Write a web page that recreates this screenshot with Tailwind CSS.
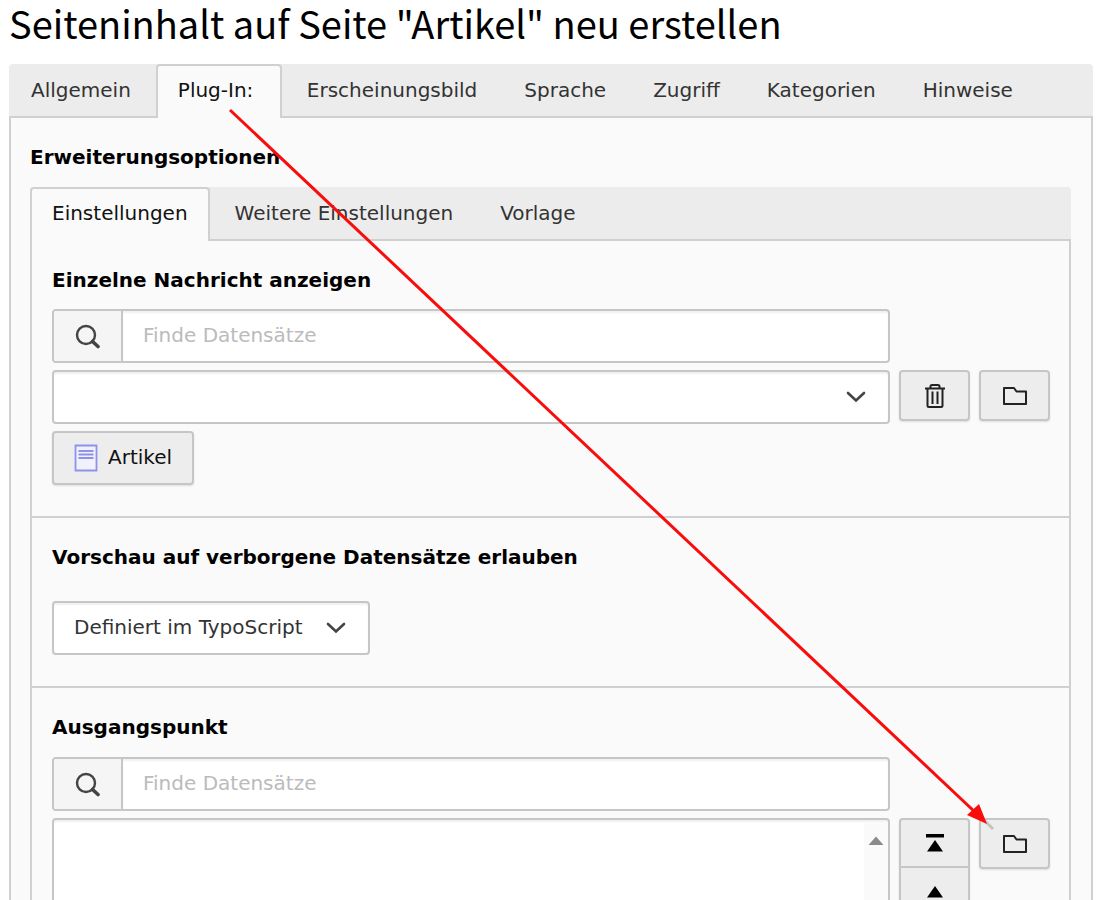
<!DOCTYPE html>
<html lang="de">
<head>
  <meta charset="UTF-8" />
  <meta name="viewport" content="width=device-width, initial-scale=1.0" />
  <title>Seiteninhalt auf Seite "Artikel" neu erstellen</title>
  <script src="https://cdn.jsdelivr.net/npm/@tailwindcss/browser@4"></script>
</head>
<body class="bg-white">

  <!-- Icons -->
  <svg class="hidden">
    <symbol id="icon-search" viewBox="0 0 26 26">
      <circle cx="11" cy="12" r="9" fill="none" stroke="#444" stroke-width="2.4" />
      <path d="M17.500 18.500L23 23.500" fill="none" stroke="#444" stroke-width="3.600" stroke-linecap="round" />
    </symbol>
    <symbol id="icon-chevron" viewBox="0 0 20 12">
      <path d="M2 2L10 9.500L18 2" fill="none" stroke="#444" stroke-width="2.600" stroke-linecap="round" />
    </symbol>
    <symbol id="icon-trash" viewBox="0 0 22 26">
      <path d="M1 5.500H21M6.500 5V3.500Q6.500 2 8 2H14Q15.500 2 15.500 3.500V5M3.500 6V22.500Q3.500 24 5 24H17Q18.500 24 18.500 22.500V6M8.500 8.500V21M13.500 8.500V21" fill="none" stroke="#222" stroke-width="2" />
    </symbol>
    <symbol id="icon-folder" viewBox="0 0 26 20">
      <path d="M2 2H12L14.500 5.500H24V18H2Z" fill="none" stroke="#222" stroke-width="2" stroke-linejoin="round" />
    </symbol>
    <symbol id="icon-page" viewBox="0 0 24 28">
      <path d="M1.500 1.500H22.500V26.500H1.500Z" fill="#f1f1fb" stroke="#8f92ea" stroke-width="1.800" />
      <path d="M4.500 7H19.500M4.500 10.500H19.500M4.500 14H19.500" fill="none" stroke="#8f92ea" stroke-width="1.800" />
    </symbol>
    <symbol id="icon-up" viewBox="0 0 18 18">
      <path d="M9 4L17 15.500H1Z" fill="#000" />
    </symbol>
    <symbol id="icon-top" viewBox="0 0 18 18">
      <path d="M0 0H18V3.500H0ZM9 6L17 17.500H1Z" fill="#000" />
    </symbol>
  </svg>

  <div class="relative h-screen overflow-hidden pr-[7px] pl-[9px] font-['DejaVu_Sans',sans-serif] text-[20px] leading-6 text-[#333]">

    <h1 class="h-16 font-['Noto_Sans_CJK_SC',sans-serif] text-[38px] leading-[46px] text-black">Seiteninhalt auf Seite "Artikel" neu erstellen</h1>

    <!-- Hauptreiter -->
    <nav class="flex gap-[3px] rounded-t border-b-2 border-[#d0d0d0] bg-[#ececec]">
      <a href="#" class="border-2 border-b-0 border-transparent px-5 pt-3 pb-3.5">Allgemein</a>
      <a href="#" class="-mb-0.5 min-w-[126px] rounded-t border-2 border-b-0 border-[#d0d0d0] bg-[#fafafa] px-5 pt-3 pb-4 text-[#111]">Plug-In:</a>
      <a href="#" class="border-2 border-b-0 border-transparent px-5 pt-3 pb-3.5">Erscheinungsbild</a>
      <a href="#" class="border-2 border-b-0 border-transparent px-5 pt-3 pb-3.5">Sprache</a>
      <a href="#" class="border-2 border-b-0 border-transparent px-5 pt-3 pb-3.5">Zugriff</a>
      <a href="#" class="border-2 border-b-0 border-transparent px-5 pt-3 pb-3.5">Kategorien</a>
      <a href="#" class="border-2 border-b-0 border-transparent px-5 pt-3 pb-3.5">Hinweise</a>
    </nav>

    <main class="border-x-2 border-[#d0d0d0] bg-[#fafafa] pt-[27px] pr-5 pl-[19px]">
      <h2 class="mb-[18px] font-bold text-black">Erweiterungsoptionen</h2>

      <!-- Unterreiter -->
      <nav class="flex gap-[3px] rounded-t border-b-2 border-[#d0d0d0] bg-[#ececec]">
        <a href="#" class="-mb-0.5 rounded-t border-2 border-b-0 border-[#d0d0d0] bg-[#fafafa] px-5 pt-3 pb-4 text-[#111]">Einstellungen</a>
        <a href="#" class="border-2 border-b-0 border-transparent px-5 pt-3 pb-3.5">Weitere Einstellungen</a>
        <a href="#" class="border-2 border-b-0 border-transparent px-5 pt-3 pb-3.5">Vorlage</a>
      </nav>

      <div class="border-x-2 border-[#d0d0d0]">

        <!-- Einzelne Nachricht -->
        <section class="border-b-2 border-[#d0d0d0] pt-[27px] pr-[19px] pb-[31px] pl-5">
          <label for="news-search" class="mb-[17px] block font-bold text-black">Einzelne Nachricht anzeigen</label>
          <div class="grid grid-cols-[1fr_71px_71px] gap-x-[9px] gap-y-[7px]">
            <div class="flex h-[54px] overflow-hidden rounded border-2 border-[#c6c6c6] bg-white">
              <span class="flex w-[69px] shrink-0 items-center justify-center border-r-2 border-[#c6c6c6] bg-[#f5f5f5]">
                <svg class="size-[26px]"><use href="#icon-search" /></svg>
              </span>
              <input id="news-search" type="text" placeholder="Finde Datensätze" class="min-w-0 flex-1 px-5 pb-0.5 shadow-[inset_0_2px_2px_rgba(0,0,0,0.06)] placeholder:text-[#bbb]" />
            </div>
            <div class="relative col-start-1">
              <select aria-label="Nachricht" class="block h-[54px] w-full appearance-none rounded border-2 border-[#c6c6c6] bg-white px-5 shadow-[inset_0_2px_2px_rgba(0,0,0,0.06)]">
                <option></option>
              </select>
              <svg class="pointer-events-none absolute top-[21px] right-6 h-3 w-5"><use href="#icon-chevron" /></svg>
            </div>
            <button type="button" aria-label="Löschen" class="flex h-[51px] items-center justify-center rounded border-2 border-[#c6c6c6] bg-[#ededed] shadow-[0_1px_2px_rgba(0,0,0,0.12)]">
              <svg class="h-[26px] w-[22px]"><use href="#icon-trash" /></svg>
            </button>
            <button type="button" aria-label="Ordner" class="flex h-[51px] items-center justify-center rounded border-2 border-[#c6c6c6] bg-[#ededed] shadow-[0_1px_2px_rgba(0,0,0,0.12)]">
              <svg class="h-5 w-[26px]"><use href="#icon-folder" /></svg>
            </button>
            <button type="button" class="flex h-[54px] items-center gap-2.5 justify-self-start rounded border-2 border-[#c6c6c6] bg-[#ededed] px-5 text-[#111] shadow-[0_1px_2px_rgba(0,0,0,0.12)]">
              <svg class="h-7 w-6"><use href="#icon-page" /></svg>
              <span class="pb-0.5">Artikel</span>
            </button>
          </div>
        </section>

        <!-- Vorschau -->
        <section class="border-b-2 border-[#d0d0d0] pt-[27px] pr-[19px] pb-[31px] pl-5">
          <label for="preview" class="mb-8 block font-bold text-black">Vorschau auf verborgene Datensätze erlauben</label>
          <div class="relative w-[318px]">
            <select id="preview" class="block h-[54px] w-full appearance-none rounded border-2 border-[#c6c6c6] bg-white px-5 pb-0.5 shadow-[inset_0_2px_2px_rgba(0,0,0,0.06)]">
              <option>Definiert im TypoScript</option>
            </select>
            <svg class="pointer-events-none absolute top-[21px] right-6 h-3 w-5"><use href="#icon-chevron" /></svg>
          </div>
        </section>

        <!-- Ausgangspunkt -->
        <section class="pt-[27px] pr-[19px] pb-[31px] pl-5">
          <label for="start-search" class="mb-[18px] block font-bold text-black">Ausgangspunkt</label>
          <div class="grid grid-cols-[1fr_71px_71px] gap-x-[9px] gap-y-[7px]">
            <div class="flex h-[54px] overflow-hidden rounded border-2 border-[#c6c6c6] bg-white">
              <span class="flex w-[69px] shrink-0 items-center justify-center border-r-2 border-[#c6c6c6] bg-[#f5f5f5]">
                <svg class="size-[26px]"><use href="#icon-search" /></svg>
              </span>
              <input id="start-search" type="text" placeholder="Finde Datensätze" class="min-w-0 flex-1 px-5 pb-0.5 shadow-[inset_0_2px_2px_rgba(0,0,0,0.06)] placeholder:text-[#bbb]" />
            </div>
            <div class="relative col-start-1">
              <select multiple aria-label="Ausgangspunkt" class="block h-[200px] w-full rounded border-2 border-[#c6c6c6] bg-white shadow-[inset_0_2px_2px_rgba(0,0,0,0.06)]"></select>
              <div class="pointer-events-none absolute inset-y-1 right-0.5 flex w-6 justify-center bg-[#fafafa] pt-3.5">
                <svg class="h-2.5 w-4" viewBox="0 0 16 10"><path d="M8 0.500L15.500 9H0.500Z" fill="#8b8b8b" /></svg>
              </div>
            </div>
            <div class="flex flex-col self-start rounded bg-[#ededed] shadow-[0_1px_2px_rgba(0,0,0,0.12)]">
              <button type="button" aria-label="Ganz nach oben" class="flex h-[50px] items-center justify-center rounded-t border-2 border-[#c6c6c6]">
                <svg class="size-[18px]"><use href="#icon-top" /></svg>
              </button>
              <button type="button" aria-label="Nach oben" class="flex h-12 items-center justify-center rounded-b border-2 border-t-0 border-[#c6c6c6]">
                <svg class="size-[18px]"><use href="#icon-up" /></svg>
              </button>
            </div>
            <button type="button" aria-label="Ordner" class="flex h-[51px] items-center justify-center rounded border-2 border-[#c6c6c6] bg-[#ededed] shadow-[0_1px_2px_rgba(0,0,0,0.12)]">
              <svg class="h-5 w-[26px]"><use href="#icon-folder" /></svg>
            </button>
          </div>
        </section>
      </div>
    </main>

    <!-- Pfeil vom Reiter zum Ordner -->
    <svg class="pointer-events-none absolute top-0 left-0 h-full w-full">
      <path d="M982 818L993 829" stroke="#999" stroke-opacity="0.500" stroke-width="3" />
      <path d="M230 110L976 813" stroke="#f80c0c" stroke-width="3" />
      <path d="M987 824L967 815L979 804Z" fill="#f80c0c" />
    </svg>
  </div>
</body>
</html>
